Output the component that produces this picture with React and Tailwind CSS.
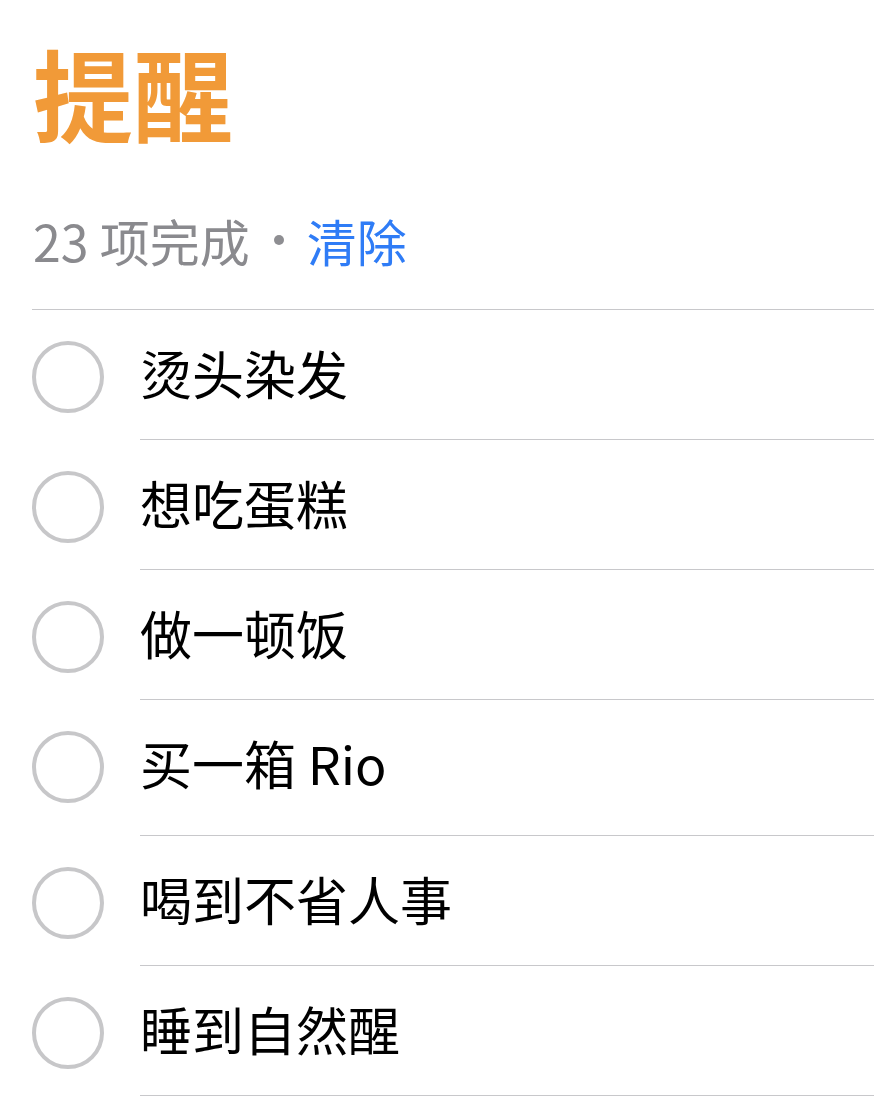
import React from 'react';

const items = [
  { text: '烫头染发', pb: 'pb-[26px]' },
  { text: '想吃蛋糕', pb: 'pb-[26px]' },
  { text: '做一顿饭', pb: 'pb-[26px]' },
  { text: '买一箱 Rio', pb: 'pb-[32px]' },
  { text: '喝到不省人事', pb: 'pb-[26px]' },
  { text: '睡到自然醒', pb: 'pb-[26px]' },
];

const font = { fontFamily: '"Noto Sans CJK SC", "Noto Sans", sans-serif' };

const Row = ({ text, pb }) => (
  <div className="flex items-start">
    <div className="w-[140px] shrink-0 pl-[32px] pt-[31px]">
      <div className="w-[72px] h-[72px] rounded-full border-[4px] border-[#c7c7c9]" />
    </div>
    <div className={`flex-1 border-b border-[#c8c8cb] pt-[31px] ${pb}`}>
      <div className="h-[72px] pb-[8px] flex items-center text-[52px] leading-none text-black">{text}</div>
    </div>
  </div>
);

const App = () => {
  return (
    <div className="w-[874px] h-[1101px] bg-white overflow-hidden" style={font}>
      <div className="pl-[33px] pt-[32px]">
        <h1 className="text-[100px] leading-[120px] font-bold text-[#f19a38]">提醒</h1>
        <div className="mt-[56px] flex items-center text-[50px] leading-[64px] text-[#8a8a8e]">
          <span>23 项完成</span>
          <span className="ml-[24px] mr-[23px] w-[10px] h-[10px] rounded-full bg-[#8e8e92]" />
          <span className="text-[#2f7cf6]">清除</span>
        </div>
      </div>
      <div className="ml-[32px] mt-[37px] border-b border-[#c8c8cb]" />
      <div>
        {items.map((item) => (
          <Row key={item.text} text={item.text} pb={item.pb} />
        ))}
      </div>
    </div>
  );
};

export default App;
